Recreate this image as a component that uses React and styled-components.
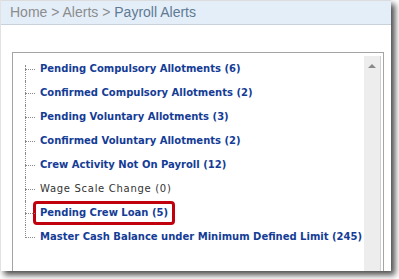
import React from "react";
import styled, { createGlobalStyle } from "styled-components";

const GlobalStyle = createGlobalStyle`
  html, body {
    margin: 0;
    padding: 0;
    background: #ffffff;
  }
`;

const alerts = [
    { label: "Pending Compulsory Allotments", count: 6, link: true },
    { label: "Confirmed Compulsory Allotments", count: 2, link: true },
    { label: "Pending Voluntary Allotments", count: 3, link: true },
    { label: "Confirmed Voluntary Allotments", count: 2, link: true },
    { label: "Crew Activity Not On Payroll", count: 12, link: true },
    { label: "Wage Scale Change", count: 0, link: false },
    { label: "Pending Crew Loan", count: 5, link: true, marked: true },
    { label: "Master Cash Balance under Minimum Defined Limit", count: 245, link: true },
];

function App() {
    return (
        <>
            <GlobalStyle />
            <Page>
                <Window>
                    <Breadcrumb>
                        <Crumb>Home &gt; Alerts &gt; </Crumb>
                        <Current>Payroll Alerts</Current>
                    </Breadcrumb>
                    <Body>
                        <Panel>
                            <TreeArea>
                                <Tree>
                                    {alerts.map((a) => (
                                        <Node key={a.label}>
                                            <Label $link={a.link} $marked={a.marked}>
                                                {a.label} ({a.count})
                                            </Label>
                                        </Node>
                                    ))}
                                </Tree>
                            </TreeArea>
                            <ScrollBar>
                                <ArrowUp />
                            </ScrollBar>
                        </Panel>
                    </Body>
                </Window>
            </Page>
        </>
    );
}

export default App;

const Page = styled.div`
    width: 399px;
    height: 279px;
    overflow: hidden;
    background: #ffffff;
`;
const Window = styled.div`
    width: 390px;
    height: 270px;
    border-top: 1px solid #dcdcdc;
    border-left: 1px solid #e2e2e2;
    background: #ffffff;
    box-shadow: 4px 4px 6px rgba(0, 0, 0, 0.7);
    overflow: hidden;
    display: flex;
    flex-direction: column;
`;
const Breadcrumb = styled.div`
    height: 23px;
    flex-shrink: 0;
    background: #e4eef9;
    border-bottom: 1px solid #c9d1da;
    padding-left: 9px;
    font-family: "Liberation Sans", Arial, sans-serif;
    font-size: 14px;
    line-height: 22px;
    white-space: nowrap;
`;
const Crumb = styled.span`
    color: #8c8c8c;
`;
const Current = styled.span`
    color: #5f7a93;
`;
const Body = styled.div`
    flex: 1;
    padding: 27px 7px 0 11px;
`;
const Panel = styled.div`
    height: 100%;
    border: 1px solid #a4a4a4;
    border-bottom: none;
    padding: 3px 2px 0 0;
    box-sizing: border-box;
    display: flex;
`;
const TreeArea = styled.div`
    flex: 1;
    overflow: hidden;
`;
const ScrollBar = styled.div`
    width: 16px;
    background: #ededed;
    border-right: 1px solid #d0d0d0;
    display: flex;
    justify-content: center;
    padding-top: 8px;
`;
const ArrowUp = styled.div`
    width: 0;
    height: 0;
    border-left: 4px solid transparent;
    border-right: 4px solid transparent;
    border-bottom: 4px solid #8a8a8a;
`;
const Tree = styled.ul`
    list-style: none;
    margin: 0;
    padding: 1px 0 0 12px;
`;
const Node = styled.li`
    position: relative;
    height: 24px;
    display: flex;
    align-items: center;
    padding-left: 15px;

    &::before {
        content: "";
        position: absolute;
        left: 0;
        top: 12px;
        width: 10px;
        border-top: 1px dotted #8a8a8a;
    }
    &::after {
        content: "";
        position: absolute;
        left: 0;
        top: 0;
        height: 24px;
        border-left: 1px dotted #8a8a8a;
    }
    &:first-child::after {
        top: 8px;
        height: 16px;
    }
    &:last-child::after {
        height: 13px;
    }
`;
const Label = styled.span`
    font-family: "DejaVu Sans", Verdana, sans-serif;
    font-size: 10px;
    line-height: 12px;
    font-weight: ${(p) => (p.$link ? "bold" : "normal")};
    letter-spacing: ${(p) => (p.$link ? "0" : "0.7px")};
    color: ${(p) => (p.$link ? "#143c96" : "#333333")};
    white-space: nowrap;
    padding: ${(p) => (p.$marked ? "3px 4px" : "0")};
    margin-left: ${(p) => (p.$marked ? "-7px" : "0")};
    border: ${(p) => (p.$marked ? "3px solid #c0000c" : "none")};
    border-radius: 4px;
`;
